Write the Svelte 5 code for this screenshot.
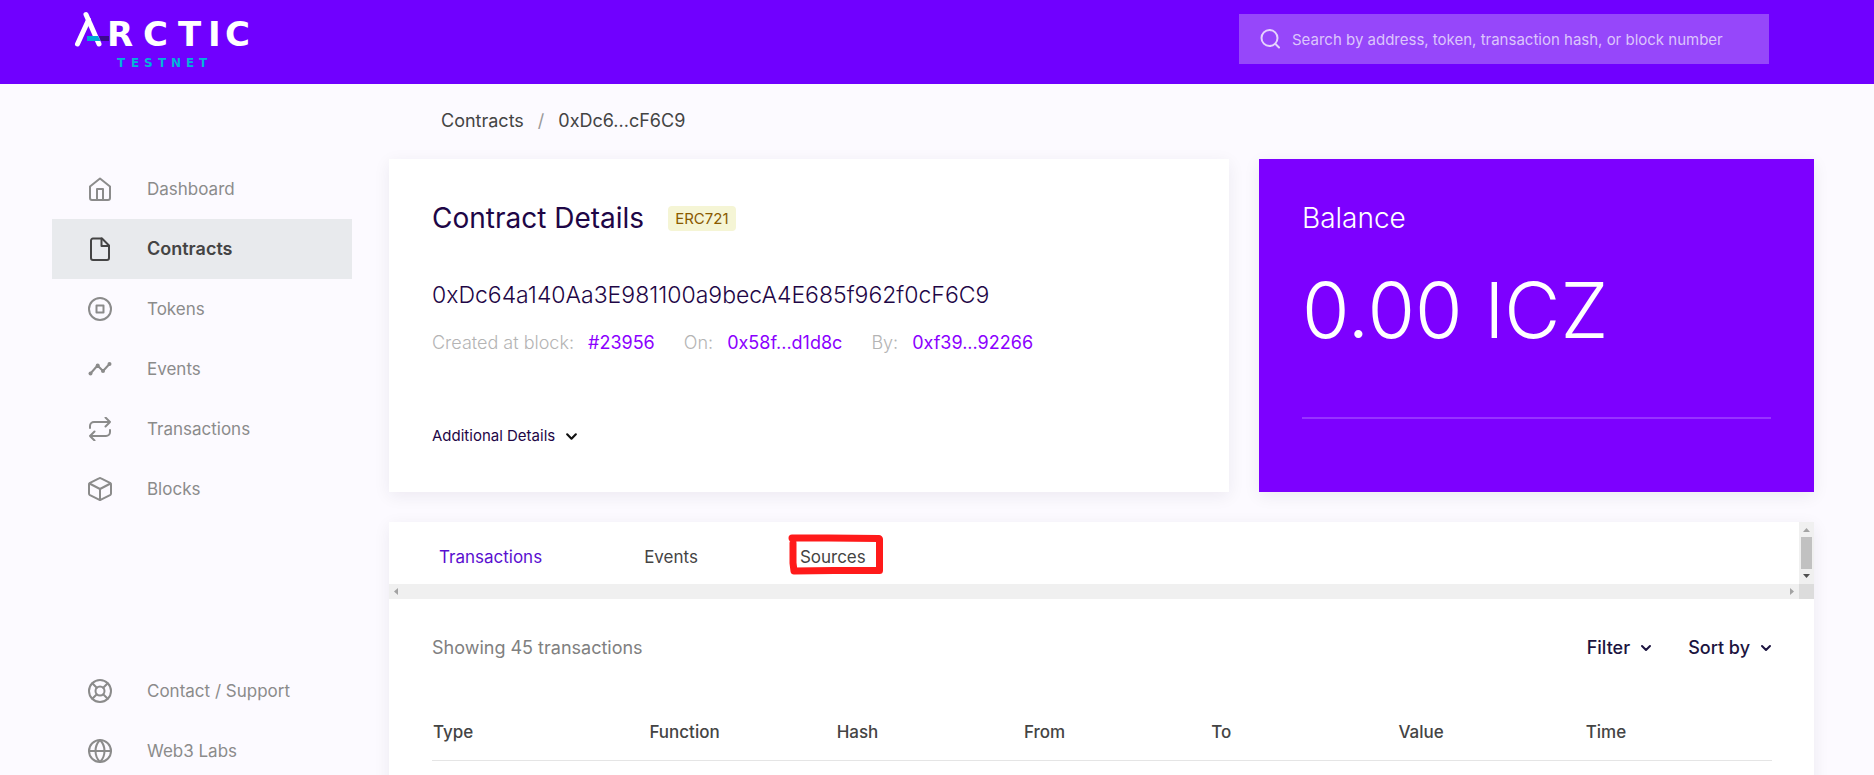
<script>
  const mainNav = [
    { label: 'Dashboard', icon: 'home' },
    { label: 'Contracts', icon: 'file', active: true },
    { label: 'Tokens', icon: 'token' },
    { label: 'Events', icon: 'activity' },
    { label: 'Transactions', icon: 'repeat' },
    { label: 'Blocks', icon: 'box' }
  ];
  const footNav = [
    { label: 'Contact / Support', icon: 'support' },
    { label: 'Web3 Labs', icon: 'globe' }
  ];
  const tabs = ['Transactions', 'Events', 'Sources'];
  const columns = ['Type', 'Function', 'Hash', 'From', 'To', 'Value', 'Time'];
  let current = $state('Transactions');
</script>

{#snippet icon(name)}
  <svg class="icon" viewBox="0 0 24 24" aria-hidden="true">
    {#if name === 'home'}
      <path d="M2 9.5 12 1.5l10 8V21a2 2 0 0 1-2 2H4a2 2 0 0 1-2-2z" />
      <path d="M9 23V12h6v11" />
    {:else if name === 'file'}
      <path d="M14 1.5H5a2 2 0 0 0-2 2V21a2 2 0 0 0 2 2h14a2 2 0 0 0 2-2V8.5z" />
      <path d="M13.5 1.5v7.5H21" />
    {:else if name === 'token'}
      <circle cx="12" cy="12" r="11" />
      <path d="M8.5 8.5h7v7h-7z" />
    {:else if name === 'activity'}
      <path d="M2.5 16.5 9.5 8.5l5.500 5.500 6.500-7" />
      <g class="dots"><circle cx="2.5" cy="16.5" r="2" /><circle cx="9.7" cy="8.5" r="2" /><circle cx="15" cy="14" r="2" /><circle cx="21.5" cy="7" r="2" /></g>
    {:else if name === 'repeat'}
      <path d="m17.5 0.5 4.500 4.500-4.500 4.500M2 11V9a4 4 0 0 1 4-4h16M6.500 23.500 2 19l4.500-4.500M22 13v2a4 4 0 0 1-4 4H2" />
    {:else if name === 'box'}
      <path d="M23 16.500v-9a2 2 0 0 0-1-1.700l-9-4.500a2 2 0 0 0-2 0L2 5.800a2 2 0 0 0-1 1.700v9a2 2 0 0 0 1 1.700l9 4.500a2 2 0 0 0 2 0l9-4.500a2 2 0 0 0 1-1.700z" />
      <path d="m1.500 6.500 10.500 5.500 10.500-5.500M12 23V12" />
    {:else if name === 'support'}
      <circle cx="12" cy="12" r="11" /><circle cx="12" cy="12" r="4.5" />
      <path d="m4.300 4.300 4.500 4.500m6.400 6.400 4.500 4.500m0-15.400-4.500 4.500m-6.400 6.400-4.500 4.500" />
    {:else if name === 'globe'}
      <circle cx="12" cy="12" r="11" />
      <path d="M1 12h22M12 1c3 3 4.500 7 4.500 11S15 20 12 23c-3-3-4.500-7-4.500-11S9 4 12 1z" />
    {/if}
  </svg>
{/snippet}

{#snippet chevron()}
  <svg class="chevron" viewBox="0 0 12 12" aria-hidden="true"><path d="m2 4 4 4 4-4" /></svg>
{/snippet}

<header class="topbar">
  <a class="logo" href="#home" aria-label="Arctic Testnet">
    <svg width="180" height="60" viewBox="0 0 180 60">
      <g fill="none" stroke="#fff" stroke-width="5" stroke-linecap="round" stroke-linejoin="round">
        <path d="M3.500 36 14.500 12" /><path d="m12 6.500 13 29.500" />
      </g>
      <path d="M25 28h10v5H27z" fill="#3b0a8c" />
      <path d="M13 28h11l2.500 5H13z" fill="#00a9d6" />
      <text class="word" x="33 69 104 134 151" y="38">RCTIC</text>
      <text class="sub" x="43 57 70 84 97 112 125" y="59">TESTNET</text>
    </svg>
  </a>
  <label class="search">
    <svg width="20" height="20" viewBox="0 0 20 20" aria-hidden="true"><circle cx="9.5" cy="9" r="8" /><path d="m15.500 15 3.500 3.500" /></svg>
    <input type="search" aria-label="Search" placeholder="Search by address, token, transaction hash, or block number" />
  </label>
</header>

<div class="layout">
  <nav class="sidebar" aria-label="Main">
    <div>
      {#each mainNav as item}
        <a class="nav" class:active={item.active} href="#{item.icon}">{@render icon(item.icon)}{item.label}</a>
      {/each}
    </div>
    <div>
      {#each footNav as item}
        <a class="nav" href="#{item.icon}">{@render icon(item.icon)}{item.label}</a>
      {/each}
    </div>
  </nav>

  <main>
    <nav class="crumbs" aria-label="Breadcrumb">
      <a href="#contracts">Contracts</a><span class="slash">/</span><span>0xDc6...cF6C9</span>
    </nav>

    <div class="summary">
      <section class="card details">
        <div class="heading"><h1>Contract Details</h1><span class="badge">ERC721</span></div>
        <p class="address">0xDc64a140Aa3E981100a9becA4E685f962f0cF6C9</p>
        <dl>
          <div><dt>Created at block:</dt><dd><a href="#block">#23956</a></dd></div>
          <div><dt>On:</dt><dd><a href="#tx">0x58f...d1d8c</a></dd></div>
          <div><dt>By:</dt><dd><a href="#account">0xf39...92266</a></dd></div>
        </dl>
        <button class="more">Additional Details {@render chevron()}</button>
      </section>
      <section class="card balance">
        <h2>Balance</h2>
        <p>0.00 ICZ</p>
        <hr />
      </section>
    </div>

    <section class="card list">
      <div class="tabwrap">
        <div class="tabs" role="tablist">
          {#each tabs as tab}
            <button role="tab" aria-selected={current === tab} class:selected={current === tab} onclick={() => (current = tab)}>
              {tab}
              {#if tab === 'Sources'}
                <svg class="marker" width="96" height="42" viewBox="0 0 96 42" aria-hidden="true">
                  <path d="M4 5h36l51 .5.500.500v31.500H46l-40 .5L5 30V10" />
                </svg>
              {/if}
            </button>
          {/each}
        </div>
        <div class="vbar" aria-hidden="true">
          <svg width="15" height="15"><path d="M4 10h7L7.500 6z" fill="#a3a3a3" /></svg>
          <span></span>
          <svg width="15" height="15"><path d="M4 5h7L7.500 9z" fill="#505050" /></svg>
        </div>
        <div class="hbar" aria-hidden="true">
          <svg width="15" height="15"><path d="M9 4v7L5 7.500z" fill="#a3a3a3" /></svg>
          <svg width="15" height="15"><path d="M6 4v7l4-3.500z" fill="#a3a3a3" /></svg>
        </div>
        <div class="corner"></div>
      </div>
      <div class="body">
        <div class="toolbar">
          <span class="count">Showing 45 transactions</span>
          <button>Filter {@render chevron()}</button>
          <button>Sort by {@render chevron()}</button>
        </div>
        <table>
          <thead><tr>{#each columns as c}<th scope="col">{c}</th>{/each}</tr></thead>
        </table>
      </div>
    </section>
  </main>
</div>

<style>
  :global(body) { background: #fcfaff; font-family: Inter, sans-serif; font-size: 18px; font-weight: 400; line-height: 24px; color: #444; overflow: hidden; }
  :global(#app) { height: 100vh; display: flex; flex-direction: column; overflow: hidden; }
  a { color: inherit; text-decoration: none; }
  button { font: inherit; color: inherit; background: none; border: 0; padding: 0; cursor: pointer; }
  h1, h2, p, dl, dd { margin: 0; font-weight: inherit; }

  .topbar { flex: none; display: flex; justify-content: space-between; align-items: start; height: 84px; box-sizing: border-box; padding: 8px 105px 0 74px; background: #7000ff; }
  .logo svg { display: block; overflow: visible; }
  .word { font: bold 34px "DejaVu Sans", sans-serif; fill: #fff; }
  .sub { font: bold 12px "DejaVu Sans", sans-serif; fill: #00b4d8; }
  .search { display: flex; align-items: center; gap: 12px; width: 530px; height: 50px; margin-top: 6px; padding: 0 20px 0 21px; box-sizing: border-box; background: #9647fa; }
  .search svg { fill: none; stroke: #e5d3fd; stroke-width: 2; stroke-linecap: round; }
  .search input { flex: 1; min-width: 0; font: 15px Inter, sans-serif; color: #fff; background: none; border: 0; padding: 0; outline: 0; }
  .search input::placeholder { color: #dcc5fc; opacity: 1; }

  .layout { flex: 1; min-height: 0; display: flex; padding: 0 60px 0 52px; }
  .sidebar { flex: none; width: 300px; padding: 75px 0 0; margin-right: 37px; display: flex; flex-direction: column; gap: 142px; }
  .nav { display: flex; align-items: center; gap: 35px; height: 60px; padding-left: 36px; font-size: 17px; color: #8b8b8b; }
  .active { background: #e8eaed; color: #444; font-size: 18px; font-weight: 600; }
  .icon { flex: none; width: 24px; height: 24px; fill: none; stroke: currentColor; stroke-width: 2; stroke-linecap: round; stroke-linejoin: round; }
  .dots { fill: currentColor; stroke: none; }

  main { flex: 1; min-width: 0; }
  .crumbs { display: flex; gap: 14px; padding: 25px 52px 26px; }
  .slash { color: #999; }
  .card { background: #fff; box-shadow: 0 4px 16px rgba(30, 20, 50, 0.07); }
  .summary { display: grid; grid-template-columns: 840fr 555fr; gap: 30px; margin-bottom: 30px; }
  .details, .balance { padding: 43px; min-height: 333px; box-sizing: border-box; }
  .heading { display: flex; align-items: center; gap: 24px; }
  h1, h2 { font-size: 28px; line-height: 32px; }
  h1 { color: #1e0646; }
  h2 { font-weight: 300; }
  .badge { font-size: 15px; line-height: 25px; padding: 0 7px; border-radius: 4px; background: #f5f5d5; color: #8a5a00; }
  .address { margin-top: 45px; font-size: 23px; line-height: 32px; font-weight: 300; color: #1e0646; }
  dl { display: flex; gap: 29px; margin-top: 20px; }
  dl div { display: flex; gap: 14px; }
  dt { font-weight: 300; color: #b4b4b4; }
  dd { color: #8b00ff; }
  .more { display: flex; align-items: center; gap: 10px; margin-top: 69px; font-size: 15px; color: #1e0646; }
  .chevron { width: 12px; height: 12px; fill: none; stroke: currentColor; stroke-width: 2; stroke-linecap: round; stroke-linejoin: round; }
  .more .chevron { width: 13px; height: 13px; color: #111; }
  .balance { background: #7d00ff; color: #fff; }
  .balance p { margin-top: 31px; font-size: 77px; line-height: 90px; font-weight: 300; }
  hr { margin: 62px 0 0; border: 0; height: 2px; background: #9733ff; }

  .list { min-height: 100vh; }
  .tabwrap { display: grid; grid-template: 62px 15px / 1fr 15px; }
  .tabs { display: flex; align-items: center; gap: 102px; padding: 8px 50px 0; font-size: 17px; }
  .tabs button { position: relative; }
  .tabs .selected { color: #5a0fd0; }
  .marker { position: absolute; left: -12px; top: -12px; fill: none; stroke: #ff1a1a; stroke-width: 7; stroke-linejoin: round; stroke-linecap: round; }
  .vbar, .hbar { display: flex; background: #f0f0f0; }
  .vbar { flex-direction: column; }
  .vbar span { flex: 1; margin: 0 2px; background: #c1c1c1; }
  .hbar { justify-content: space-between; }
  .corner { background: #dcdcdc; }
  .body { padding: 37px 42px 0 43px; }
  .toolbar { display: flex; gap: 36px; color: #1c1440; font-weight: 500; }
  .count { flex: 1; color: #808080; font-weight: 400; }
  .toolbar button { display: flex; align-items: center; gap: 10px; }
  table { width: 100%; margin-top: 44px; border-collapse: collapse; table-layout: fixed; }
  th { padding: 16px 1px; text-align: left; font-size: 17px; font-weight: 500; color: #444; border-bottom: 1px solid #e5e5e5; }
  th:first-child { width: 16%; }
</style>
